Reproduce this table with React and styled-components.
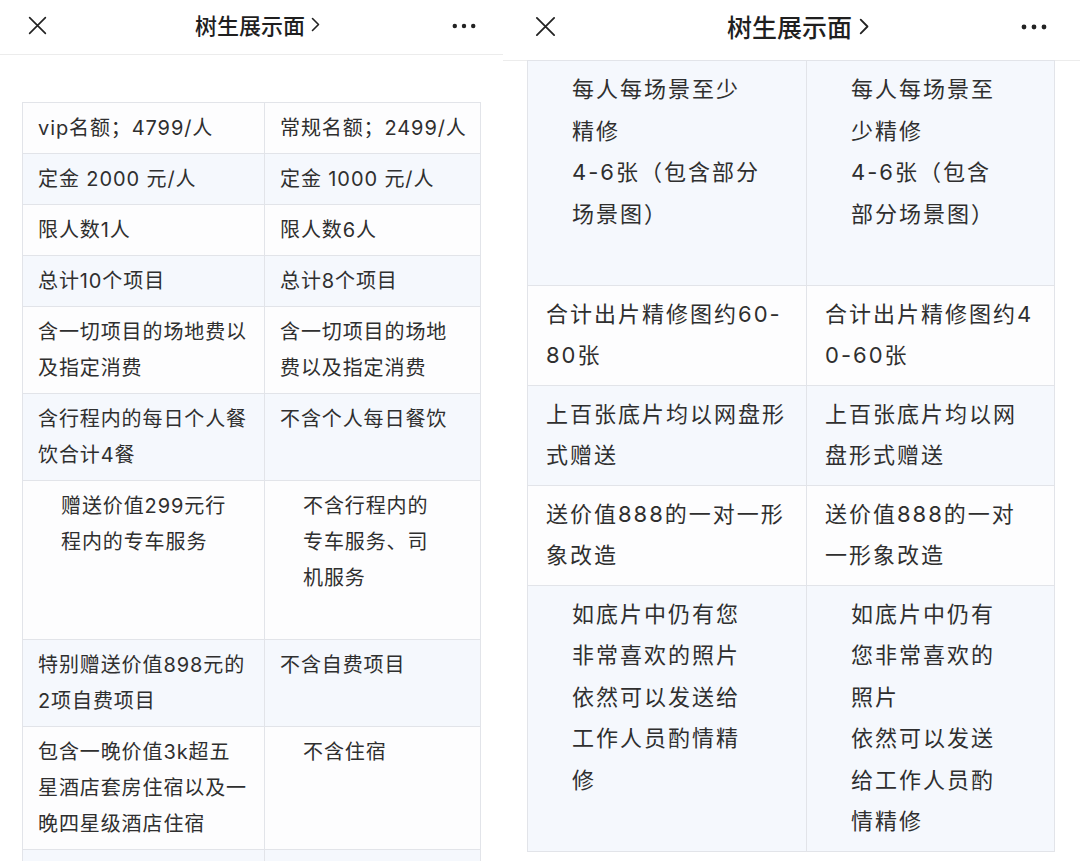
import styled, { createGlobalStyle } from "styled-components";

const GlobalStyle = createGlobalStyle`
  html, body {
    margin: 0;
    padding: 0;
    background: #ffffff;
    overflow: hidden;
  }
  body {
    font-family: Inter, "Noto Sans CJK SC", "Noto Sans", sans-serif;
    color: #333333;
  }
`;

const Screen = styled.div`
  display: flex;
  width: 1080px;
  height: 861px;
  overflow: hidden;
`;

const Panel = styled.div`
  width: ${(p) => p.$width}px;
  flex-shrink: 0;
  display: flex;
  flex-direction: column;
`;

const Header = styled.div`
  height: ${(p) => p.$height}px;
  flex-shrink: 0;
  display: grid;
  grid-template-columns: 1fr auto 1fr;
  align-items: center;
  padding: 0 ${(p) => p.$padRight}px ${(p) => p.$lift}px ${(p) => p.$padLeft}px;
  border-bottom: 1px solid #ececec;
  box-sizing: border-box;
`;

const Title = styled.div`
  display: flex;
  align-items: center;
  gap: ${(p) => p.$gap}px;
  font-family: "Noto Sans CJK SC", sans-serif;
  font-size: ${(p) => p.$size}px;
  line-height: 1;
  font-weight: 500;
  color: #1f1f1f;
  margin: 0 0 ${(p) => p.$raise}px ${(p) => p.$shift}px;
`;

const IconBox = styled.div`
  display: flex;
  justify-content: ${(p) => (p.$end ? "flex-end" : "flex-start")};
`;

const Table = styled.table`
  border-collapse: collapse;
  table-layout: fixed;
  width: ${(p) => p.$width}px;
  margin: ${(p) => p.$top}px 0 0 ${(p) => p.$left}px;
  border: 1px solid #e2e4e9;
`;

const Row = styled.tr`
  background: ${(p) => (p.$tint ? "#f5f8fd" : "#fdfdfe")};
`;

const Cell = styled.td`
  border: 1px solid #e2e4e9;
  vertical-align: top;
  white-space: nowrap;
  padding: ${(p) => (p.$big ? "8px 18px" : "7px 15px")};
  padding-left: ${(p) => (p.$big ? 18 : 15) + (p.$indent ? (p.$big ? 26 : 23) : 0)}px;
  font-size: ${(p) => (p.$big ? 22 : 20)}px;
  line-height: ${(p) => (p.$big ? 41.5 : 36)}px;
  letter-spacing: ${(p) => (p.$big ? 2 : 0.9)}px;
  color: #2f2f2f;
`;

const Line = styled.div`
  min-height: 1em;
`;

function CloseIcon({ size }) {
  return (
    <svg width={size} height={size} viewBox="0 0 24 24" fill="none">
      <path d="M3 3 L21 21 M21 3 L3 21" stroke="#222" strokeWidth="1.9" strokeLinecap="round" />
    </svg>
  );
}

function MoreIcon({ width }) {
  return (
    <svg width={width} height="8" viewBox="0 0 26 8">
      <circle cx="3" cy="4" r="2.4" fill="#222" />
      <circle cx="13" cy="4" r="2.4" fill="#222" />
      <circle cx="23" cy="4" r="2.4" fill="#222" />
    </svg>
  );
}

function Chevron({ h }) {
  return (
    <svg width={h * 0.6} height={h} viewBox="0 0 9 15" fill="none">
      <path d="M1.5 1.5 L7.5 7.5 L1.5 13.5" stroke="#222" strokeWidth="1.6" strokeLinecap="round" strokeLinejoin="round" />
    </svg>
  );
}

const leftRows = [
  { a: ["vip名额；4799/人"], b: ["常规名额；2499/人"] },
  { a: ["定金 2000 元/人"], b: ["定金 1000 元/人"] },
  { a: ["限人数1人"], b: ["限人数6人"] },
  { a: ["总计10个项目"], b: ["总计8个项目"] },
  { a: ["含一切项目的场地费以", "及指定消费"], b: ["含一切项目的场地", "费以及指定消费"] },
  { a: ["含行程内的每日个人餐", "饮合计4餐"], b: ["不含个人每日餐饮"] },
  { a: ["赠送价值299元行", "程内的专车服务"], b: ["不含行程内的", "专车服务、司", "机服务", ""], ia: true, ib: true },
  { a: ["特别赠送价值898元的", "2项自费项目"], b: ["不含自费项目"] },
  { a: ["包含一晚价值3k超五", "星酒店套房住宿以及一", "晚四星级酒店住宿"], b: ["不含住宿"], ib: true },
  { a: [""], b: [""] },
];

const rightRows = [
  {
    a: ["每人每场景至少", "精修", "4-6张（包含部分", "场景图）", ""],
    b: ["每人每场景至", "少精修", "4-6张（包含", "部分场景图）"],
    ia: true,
    ib: true,
  },
  { a: ["合计出片精修图约60-", "80张"], b: ["合计出片精修图约4", "0-60张"] },
  { a: ["上百张底片均以网盘形", "式赠送"], b: ["上百张底片均以网", "盘形式赠送"] },
  { a: ["送价值888的一对一形", "象改造"], b: ["送价值888的一对", "一形象改造"] },
  {
    a: ["如底片中仍有您", "非常喜欢的照片", "依然可以发送给", "工作人员酌情精", "修"],
    b: ["如底片中仍有", "您非常喜欢的", "照片", "依然可以发送", "给工作人员酌", "情精修"],
    ia: true,
    ib: true,
  },
];

function Lines({ items }) {
  return items.map((t, i) => <Line key={i}>{t || "\u00a0"}</Line>);
}

function CompareTable({ rows, big, width, cols, top, left, firstTint }) {
  return (
    <Table $width={width} $top={top} $left={left}>
      <colgroup>
        <col style={{ width: cols[0] }} />
        <col style={{ width: cols[1] }} />
      </colgroup>
      <tbody>
        {rows.map((r, i) => (
          <Row key={i} $tint={(i % 2 === 0) === firstTint}>
            <Cell $big={big} $indent={r.ia}>
              <Lines items={r.a} />
            </Cell>
            <Cell $big={big} $indent={r.ib}>
              <Lines items={r.b} />
            </Cell>
          </Row>
        ))}
      </tbody>
    </Table>
  );
}

export default function App() {
  return (
    <>
      <GlobalStyle />
      <Screen>
        <Panel $width={503}>
          <Header $height={55} $padLeft={27} $padRight={27} $lift={3}>
            <IconBox>
              <CloseIcon size={21} />
            </IconBox>
            <Title $size={22} $gap={6} $shift={12} $raise={3}>
              树生展示面
              <Chevron h={15} />
            </Title>
            <IconBox $end>
              <MoreIcon width={24} />
            </IconBox>
          </Header>
          <CompareTable rows={leftRows} width={458} cols={[242, 216]} top={47} left={22} firstTint={false} />
        </Panel>
        <Panel $width={577}>
          <Header $height={61} $padLeft={31} $padRight={32} $lift={7}>
            <IconBox>
              <CloseIcon size={23} />
            </IconBox>
            <Title $size={25} $gap={7} $shift={14} $raise={1}>
              树生展示面
              <Chevron h={17} />
            </Title>
            <IconBox $end>
              <MoreIcon width={28} />
            </IconBox>
          </Header>
          <CompareTable rows={rightRows} big width={527} cols={[279, 248]} top={-1} left={24} firstTint={true} />
        </Panel>
      </Screen>
    </>
  );
}
